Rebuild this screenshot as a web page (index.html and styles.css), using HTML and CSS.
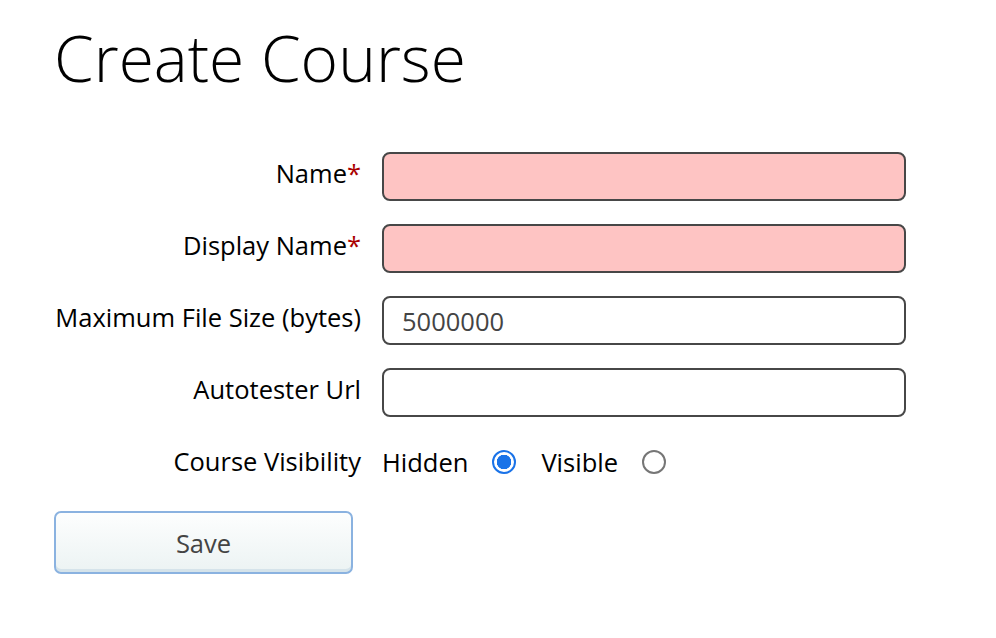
FILE: index.html
```html
<!DOCTYPE html>
<html>
<head>
<meta charset="utf-8">
<link rel="stylesheet" href="styles.css">
</head>
<body>
<div class="page">
  <h1 class="title">Create Course</h1>
  <form class="form">
    <label class="label">Name<span class="req">*</span></label>
    <input class="field field-error" type="text">
    <label class="label">Display Name<span class="req">*</span></label>
    <input class="field field-error" type="text">
    <label class="label">Maximum File Size (bytes)</label>
    <input class="field" type="text" value="5000000">
    <label class="label">Autotester Url</label>
    <input class="field" type="text">
    <label class="label">Course Visibility</label>
    <div class="radios">
      <span class="opt">Hidden</span>
      <span class="radio radio-on"></span>
      <span class="opt">Visible</span>
      <span class="radio"></span>
    </div>
  </form>
  <button class="save" type="button">Save</button>
</div>
</body>
</html>
```
FILE: styles.css
```css
html, body {
  margin: 0;
  padding: 0;
  background: #fff;
}
body {
  font-family: "Open Sans", "DejaVu Sans", sans-serif;
  color: #111;
}
.page {
  padding: 16px 0 0 54px;
}
.title {
  margin: 0;
  font-size: 64px;
  font-weight: 300;
  line-height: 1.3;
  color: #000;
}
.form {
  margin-top: 53px;
  display: grid;
  grid-template-columns: 307px 524px;
  column-gap: 21px;
  row-gap: 23px;
  grid-auto-rows: 49px;
  align-items: center;
}
.label {
  text-align: right;
  font-size: 25.5px;
  line-height: 1;
  color: #000;
  white-space: nowrap;
  padding-bottom: 6px;
}
.req {
  color: #a00;
}
.field {
  box-sizing: border-box;
  height: 49px;
  width: 524px;
  border: 2px solid #474747;
  border-radius: 8px;
  background: #fff;
  font-family: "Open Sans", sans-serif;
  font-size: 25.5px;
  color: #444;
  padding: 0 18px;
  outline: none;
}
.field-error {
  background: #fec4c3;
}
.radios {
  display: flex;
  align-items: center;
  font-size: 25.5px;
  color: #000;
  padding-bottom: 6px;
}
.opt {
  margin-right: 24px;
}
.radio {
  box-sizing: border-box;
  width: 24px;
  height: 24px;
  border-radius: 50%;
  border: 2px solid #767676;
  margin-right: 25px;
}
.radio-on {
  border: 2px solid #1a73e8;
  background: radial-gradient(circle, #1a73e8 0 7px, #fff 7.5px);
}
.save {
  display: block;
  margin-top: 22px;
  box-sizing: border-box;
  width: 299px;
  height: 63px;
  border: 2px solid #8ab2e0;
  border-radius: 7px;
  background: linear-gradient(#fdfefe, #ecf3f3);
  box-shadow: inset 0 -3px 0 #d5e3ea;
  font-family: "Open Sans", sans-serif;
  font-size: 25.5px;
  color: #444;
  padding: 0;
}
```
